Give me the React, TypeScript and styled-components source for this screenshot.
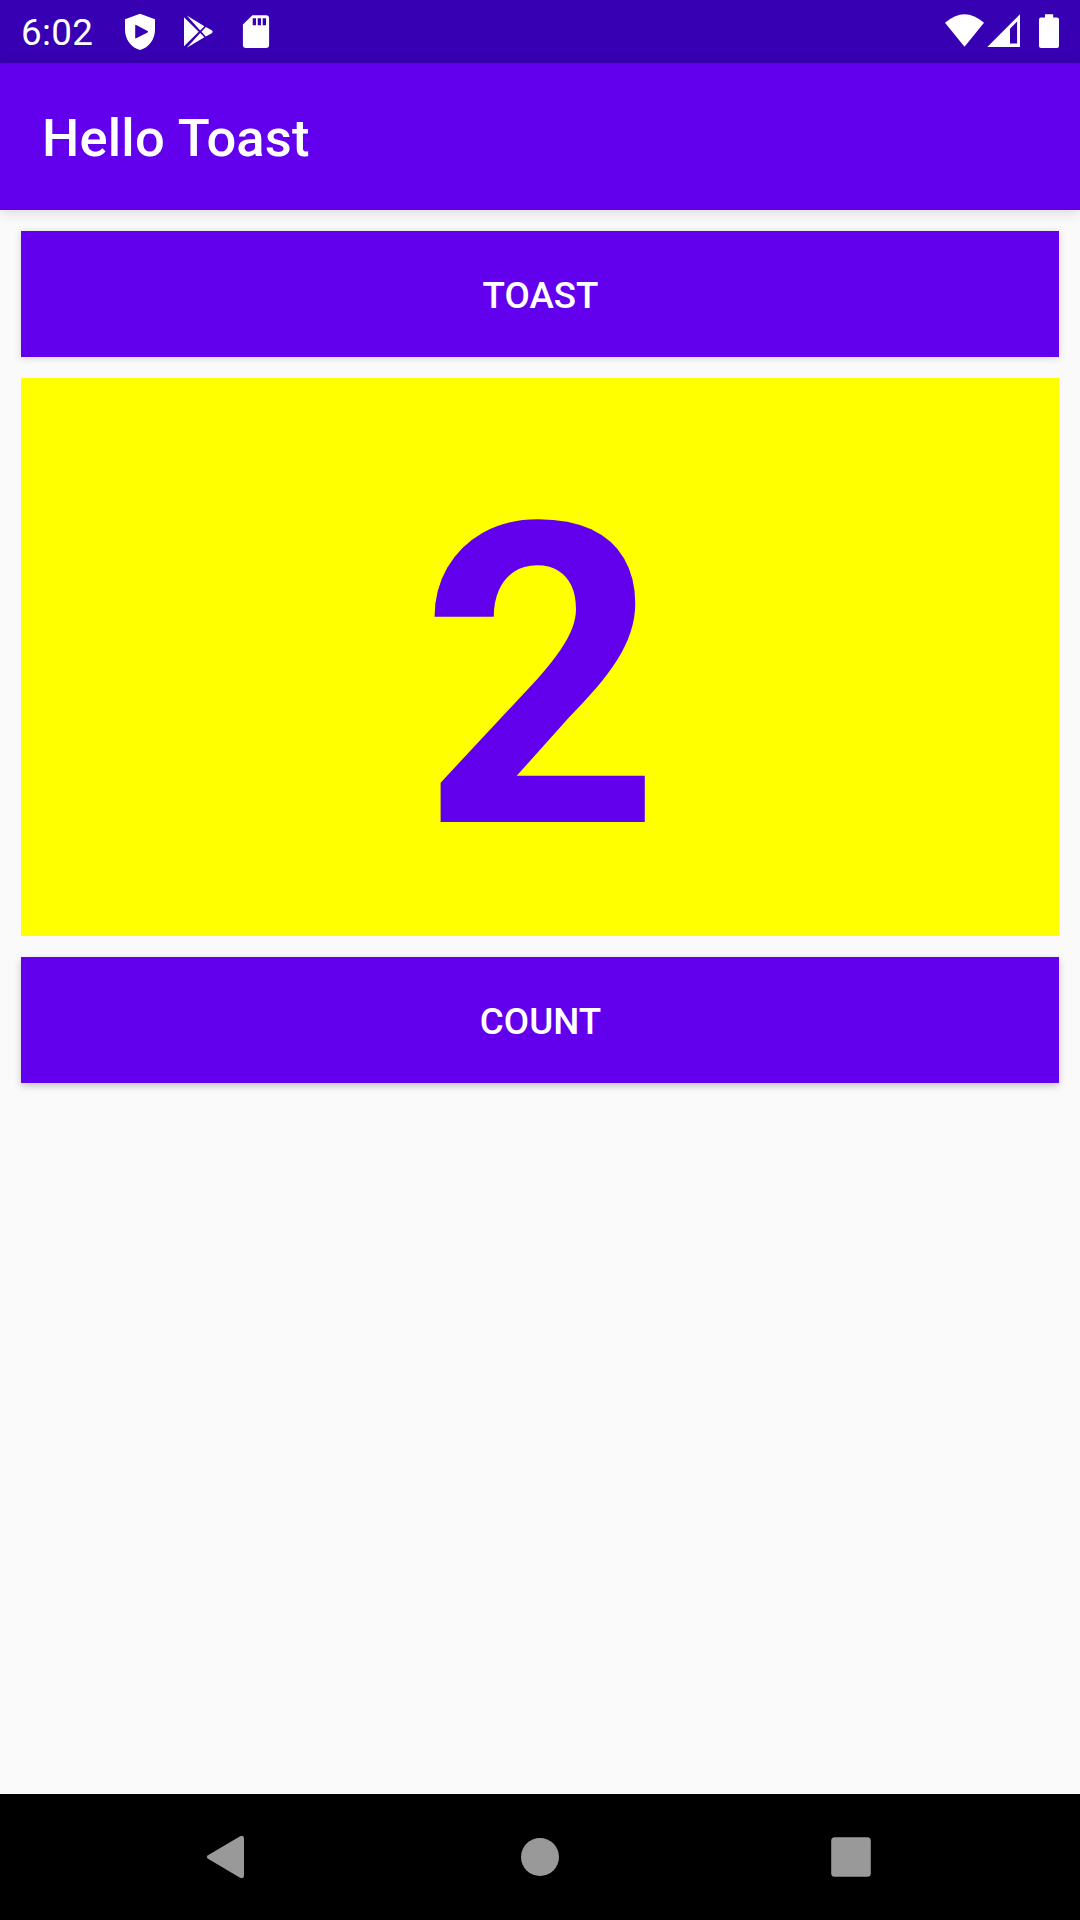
import React from "react";
import styled, { createGlobalStyle } from "styled-components";

const GlobalStyle = createGlobalStyle`
  * { box-sizing: border-box; }
  body { margin: 0; background: #fafafa; font-family: Roboto, "Liberation Sans", sans-serif; }
`;

const Screen = styled.div`
  display: flex;
  flex-direction: column;
  width: 1080px;
  height: 1920px;
  background: #fafafa;
  overflow: hidden;
`;

const StatusBar = styled.header`
  display: flex;
  justify-content: space-between;
  flex: none;
  height: 63px;
  padding: 0 21px;
  background: #3700b3;
`;

const StatusGroup = styled.div<{ $gap: number }>`
  display: flex;
  align-items: center;
  gap: ${(p) => p.$gap}px;
  height: 63px;
`;

const Clock = styled.span`
  width: 76px;
  padding-top: 3px;
  color: #fff;
  font-size: 36.75px;
  letter-spacing: 0.35px;
  line-height: 60px;
`;

const StatusIcon = styled.svg`
  display: block;
  flex: none;
  fill: #fff;
`;

const AppBar = styled.div`
  position: relative;
  z-index: 1;
  display: flex;
  align-items: center;
  flex: none;
  height: 147px;
  padding: 2px 42px 0;
  background: #6200ee;
  box-shadow: 0 2px 12px rgba(0, 0, 0, 0.14);
`;

const Title = styled.h1`
  margin: 0;
  color: #fff;
  font-size: 52.5px;
  font-weight: 500;
  letter-spacing: 0.2px;
  word-spacing: 0.8px;
  line-height: 62px;
`;

const Content = styled.main`
  display: flex;
  flex-direction: column;
  flex: 1;
  gap: 21px;
  padding: 21px;
`;

const ActionButton = styled.button<{ $drop: number; $shade: number }>`
  flex: none;
  height: 126px;
  padding: 3px 0 0 1px;
  border: 0;
  background: #6200ee;
  box-shadow: 0 ${(p) => p.$drop}px 7px rgba(0, 0, 0, ${(p) => p.$shade});
  color: #fff;
  font: 500 36.75px/44px Roboto, "Liberation Sans", sans-serif;
  text-transform: uppercase;
`;

const Counter = styled.div`
  display: flex;
  align-items: center;
  justify-content: center;
  flex: none;
  height: 558px;
  padding: 43px 0 0 1px;
  background: #ffff00;
  color: #6200ee;
  font-size: 420px;
  font-weight: 700;
  line-height: 492px;
`;

const NavBar = styled.nav`
  display: flex;
  align-items: center;
  flex: none;
  height: 126px;
  padding-left: 206px;
  background: #000;
`;

const NavIcon = styled.svg<{ $after: number }>`
  display: block;
  flex: none;
  margin-right: ${(p) => p.$after}px;
  fill: #999;
`;

export default function App() {
  return (
    <>
      <GlobalStyle />
      <Screen>
        <StatusBar>
          <StatusGroup $gap={28}>
            <Clock>6:02</Clock>
            <StatusIcon width="30" height="63" viewBox="125 0 30 63">
              <path
                fillRule="evenodd"
                d="M140 13.7 155 19.3V29.5C155 39.5 149 47.5 140 50 131 47.5 125 39.5 125 29.5V19.3ZM135.2 25.4V37.8Q135.2 38.8 136.2 38.3L147.6 32.5Q148.6 31.8 147.6 31.1L136.2 25Q135.2 24.5 135.2 25.4Z"
              />
            </StatusIcon>
            <StatusIcon width="30" height="63" viewBox="183 0 30 63">
              <path d="M184 17.2 198.7 31.7 184 46.2ZM186.8 15.6 204.4 26.2 200.2 30.4ZM200.2 33 204.4 37.2 186.8 47.8ZM205.8 27 211.8 30.2Q213.4 31.7 211.8 33.2L205.8 36.4 201.5 31.7Z" />
            </StatusIcon>
            <StatusIcon width="29" height="63" viewBox="241 0 29 63">
              <path
                fillRule="evenodd"
                d="M252.4 15.2H266Q269.1 15.2 269.1 18.4V44.8Q269.1 48 266 48H246Q242.9 48 242.9 44.8V24.6ZM252.7 18.3V25.3H256V18.3ZM257.7 18.3V25.3H261V18.3ZM262.7 18.3V25.3H266V18.3Z"
              />
            </StatusIcon>
          </StatusGroup>
          <StatusGroup $gap={3}>
            <StatusIcon width="39" height="63" viewBox="945 0 39 63">
              <path d="M945 22.8Q964.5 5.6 984 22.8L964.5 46.8Z" />
            </StatusIcon>
            <StatusIcon width="49" height="63" viewBox="987 0 49 63">
              <path fillRule="evenodd" d="M987.3 47 1020 14.3V47ZM1010 28.7V43.6H1017.1V21.6Z" />
            </StatusIcon>
            <StatusIcon width="20" height="63" viewBox="1039 0 20 63">
              <path d="M1045 14.2H1053.2V17.5H1057Q1059 17.5 1059 19.5V46Q1059 48 1057 48H1041Q1039 48 1039 46V19.5Q1039 17.5 1041 17.5H1045Z" />
            </StatusIcon>
          </StatusGroup>
        </StatusBar>
        <AppBar>
          <Title>Hello Toast</Title>
        </AppBar>
        <Content>
          <ActionButton $drop={1} $shade={0.17}>Toast</ActionButton>
          <Counter>2</Counter>
          <ActionButton $drop={3} $shade={0.22}>Count</ActionButton>
        </Content>
        <NavBar>
          <NavIcon $after={276} width="39" height="44" viewBox="206 1835 39 44">
            <path d="M208 1855.2 239.7 1836.4Q244 1834.5 244 1838.4V1875.6Q244 1879.5 239.7 1877.6L208 1858.8Q205.7 1857 208 1855.2Z" />
          </NavIcon>
          <NavIcon $after={271} width="39" height="40" viewBox="521 1837 39 40">
            <circle cx="540" cy="1857" r="19" />
          </NavIcon>
          <NavIcon $after={0} width="40" height="40" viewBox="831 1837 40 40">
            <rect x="831.2" y="1837.2" width="39.6" height="39.6" rx="3.5" />
          </NavIcon>
        </NavBar>
      </Screen>
    </>
  );
}
